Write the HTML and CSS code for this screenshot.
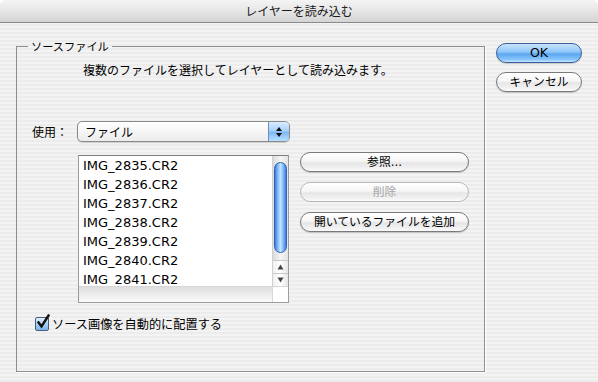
FILE: index.html
```html
<!DOCTYPE html>
<html lang="ja">
<head>
<meta charset="utf-8">
<title>レイヤーを読み込む</title>
<link rel="stylesheet" href="styles.css">
</head>
<body>
<div class="window">
  <div class="titlebar">レイヤーを読み込む</div>
  <div class="content">
    <fieldset class="group">
      <legend class="group-title">ソースファイル</legend>
      <p class="desc">複数のファイルを選択してレイヤーとして読み込みます。</p>
      <div class="use-row">
        <span class="use-label">使用：</span>
        <div class="popup">
          <span class="popup-text">ファイル</span>
          <span class="stepper">
            <svg width="8" height="12" viewBox="0 0 8 12"><path d="M4 1 L7 5 L1 5 Z" fill="#111"/><path d="M1 7 L7 7 L4 11 Z" fill="#111"/></svg>
          </span>
        </div>
      </div>
      <div class="list-row">
        <div class="listbox">
          <div class="list-main">
            <ul class="items">
              <li>IMG_2835.CR2</li>
              <li>IMG_2836.CR2</li>
              <li>IMG_2837.CR2</li>
              <li>IMG_2838.CR2</li>
              <li>IMG_2839.CR2</li>
              <li>IMG_2840.CR2</li>
              <li>IMG_2841.CR2</li>
            </ul>
            <div class="vscroll">
              <div class="track"><div class="thumb"></div></div>
              <div class="arrow">
                <svg width="7" height="6" viewBox="0 0 7 6"><path d="M3.5 0.5 L6.5 5.5 L0.5 5.5 Z" fill="#444"/></svg>
              </div>
              <div class="arrow">
                <svg width="7" height="6" viewBox="0 0 7 6"><path d="M0.5 0.5 L6.5 0.5 L3.5 5.5 Z" fill="#444"/></svg>
              </div>
            </div>
          </div>
          <div class="list-foot"><div class="foot-left"></div><div class="foot-corner"></div></div>
        </div>
        <div class="list-buttons">
          <button class="btn">参照...</button>
          <button class="btn disabled">削除</button>
          <button class="btn">開いているファイルを追加</button>
        </div>
      </div>
      <label class="check-row">
        <span class="checkbox">
          <svg width="17" height="17" viewBox="0 0 17 17"><path d="M3.5 8.5 L6.5 12.5 L13.5 1.5" fill="none" stroke="#111" stroke-width="2.4" stroke-linecap="square" stroke-linejoin="miter"/></svg>
        </span>
        <span class="check-text">ソース画像を自動的に配置する</span>
      </label>
    </fieldset>
    <div class="actions">
      <button class="btn default">OK</button>
      <button class="btn">キャンセル</button>
    </div>
  </div>
</div>
</body>
</html>
```

FILE: styles.css
```css
html {
  background: #ffffff;
}
body {
  margin: 0;
  font-family: "DejaVu Sans", "Noto Sans CJK JP", sans-serif;
  font-size: 12px;
  color: #000;
}
.window {
  width: 598px;
  height: 382px;
  overflow: hidden;
  border-radius: 6px 6px 0 0;
  background: repeating-linear-gradient(to bottom, #ececec 0px, #ececec 2px, #f3f3f3 2px, #f3f3f3 4px);
}
.titlebar {
  height: 22px;
  line-height: 22px;
  text-align: center;
  font-family: "Noto Sans CJK JP", sans-serif;
  font-size: 12px;
  color: #1a1a1a;
  background: linear-gradient(to bottom, #f4f4f4 0%, #e6e6e6 50%, #d4d4d4 100%);
  border-bottom: 1px solid #8a8a8a;
  border-radius: 6px 6px 0 0;
}
.content {
  display: flex;
  align-items: flex-start;
  padding-left: 16px;
}
.group {
  box-sizing: border-box;
  margin: 16px 0 0 0;
  padding: 0;
  width: 469px;
  height: 333px;
  min-width: 0;
  border: 1px solid #8e8e8e;
  box-shadow: 1px 1px 0 #ffffff;
}
.group-title {
  margin-left: 11px;
  padding: 0 3px;
  line-height: 14px;
  font-family: "Noto Sans CJK JP", sans-serif;
  font-size: 11.2px;
}
.desc {
  margin: 9px 0 0 66px;
  line-height: 16px;
  font-family: "Noto Sans CJK JP", sans-serif;
  font-size: 12px;
}
.use-row {
  margin-top: 43px;
  padding-left: 15px;
  display: flex;
  align-items: center;
}
.use-label {
  width: 45px;
  font-family: "Noto Sans CJK JP", sans-serif;
  font-size: 12px;
}
.popup {
  box-sizing: border-box;
  width: 213px;
  height: 21px;
  display: flex;
  align-items: stretch;
  border: 1px solid #8a8a8a;
  border-radius: 5px;
  background: linear-gradient(to bottom, #ffffff 0%, #f6f6f6 50%, #ececec 100%);
  box-shadow: 0 1px 1px rgba(0,0,0,0.15);
  overflow: hidden;
}
.popup-text {
  flex: 1;
  padding-left: 7px;
  line-height: 19px;
  font-family: "Noto Sans CJK JP", sans-serif;
  font-size: 12px;
}
.stepper {
  width: 20px;
  display: flex;
  align-items: center;
  justify-content: center;
  border-left: 1px solid #6b8fc4;
  background: linear-gradient(to bottom, #d8ecff 0%, #a9d1fb 45%, #7fb8f3 55%, #b8e0ff 100%);
}
.list-row {
  margin-top: 13px;
  padding-left: 61px;
  display: flex;
  align-items: flex-start;
}
.listbox {
  box-sizing: border-box;
  width: 211px;
  height: 148px;
  border: 1px solid #9c9c9c;
  border-top-color: #7c7c7c;
  background: #ffffff;
  display: flex;
  flex-direction: column;
}
.list-main {
  height: 131px;
  display: flex;
  overflow: hidden;
}
.items {
  flex: 1;
  margin: 0;
  padding: 0 0 0 4px;
  list-style: none;
  font-family: "DejaVu Sans", sans-serif;
  font-size: 13px;
  line-height: 19px;
  overflow: hidden;
}
.vscroll {
  width: 15px;
  display: flex;
  flex-direction: column;
  border-left: 1px solid #d0d0d0;
  background: linear-gradient(to right, #dcdcdc, #f4f4f4 50%, #e4e4e4);
}
.track {
  height: 105px;
  padding: 6px 1px 0 1px;
  box-sizing: border-box;
}
.thumb {
  height: 91px;
  border-radius: 7px;
  border: 1px solid #2f5fb0;
  box-sizing: border-box;
  background: linear-gradient(to right, #3d7de0 0%, #8ec3fb 30%, #c4e2ff 50%, #8ec3fb 70%, #3d7de0 100%);
}
.arrow {
  height: 13px;
  display: flex;
  align-items: center;
  justify-content: center;
  border-top: 1px solid #c8c8c8;
  box-sizing: border-box;
  background: linear-gradient(to right, #f0f0f0, #ffffff 50%, #e6e6e6);
}
.list-foot {
  height: 15px;
  display: flex;
  border-top: 1px solid #d6d6d6;
}
.foot-left {
  flex: 1;
  background: linear-gradient(to bottom, #dedede 0%, #f0f0f0 60%, #fafafa 100%);
}
.foot-corner {
  width: 15px;
  border-left: 1px solid #d8d8d8;
  background: #ffffff;
}
.list-buttons {
  margin-left: 11px;
  margin-top: -3px;
  width: 169px;
  display: flex;
  flex-direction: column;
  gap: 10px;
}
.btn {
  box-sizing: border-box;
  height: 20px;
  padding: 0;
  border: 1px solid #7a7a7a;
  border-radius: 10px;
  background: linear-gradient(to bottom, #ffffff 0%, #f6f6f6 45%, #e6e6e6 55%, #f2f2f2 85%, #fbfbfb 100%);
  box-shadow: 0 1px 1px rgba(0,0,0,0.18);
  font-family: "DejaVu Sans", "Noto Sans CJK JP", sans-serif;
  font-size: 11.8px;
  line-height: 18px;
  color: #000;
}
.btn.disabled {
  color: #a6a6a6;
  border-color: #b8b8b8;
  box-shadow: none;
}
.btn.default {
  border-color: #3c5f9c;
  background: linear-gradient(to bottom, #c8e4ff 0%, #8ec6f8 45%, #5aa6f0 55%, #86c4fb 85%, #c4e6ff 100%);
  font-size: 12.5px;
}
.check-row {
  margin-top: 13px;
  padding-left: 18px;
  height: 16px;
  display: flex;
  align-items: center;
}
.checkbox {
  position: relative;
  box-sizing: border-box;
  width: 14px;
  height: 14px;
  border: 1px solid #4a5e7c;
  border-radius: 2px;
  background: linear-gradient(to bottom, #e0f0ff 0%, #a8d0f8 50%, #7ab4ee 100%);
}
.checkbox svg {
  position: absolute;
  left: -1px;
  top: -4px;
}
.check-text {
  margin-left: 3px;
  font-family: "Noto Sans CJK JP", sans-serif;
  font-size: 12.2px;
}
.actions {
  margin: 20px 0 0 11px;
  width: 86px;
  display: flex;
  flex-direction: column;
  gap: 9px;
}
```
